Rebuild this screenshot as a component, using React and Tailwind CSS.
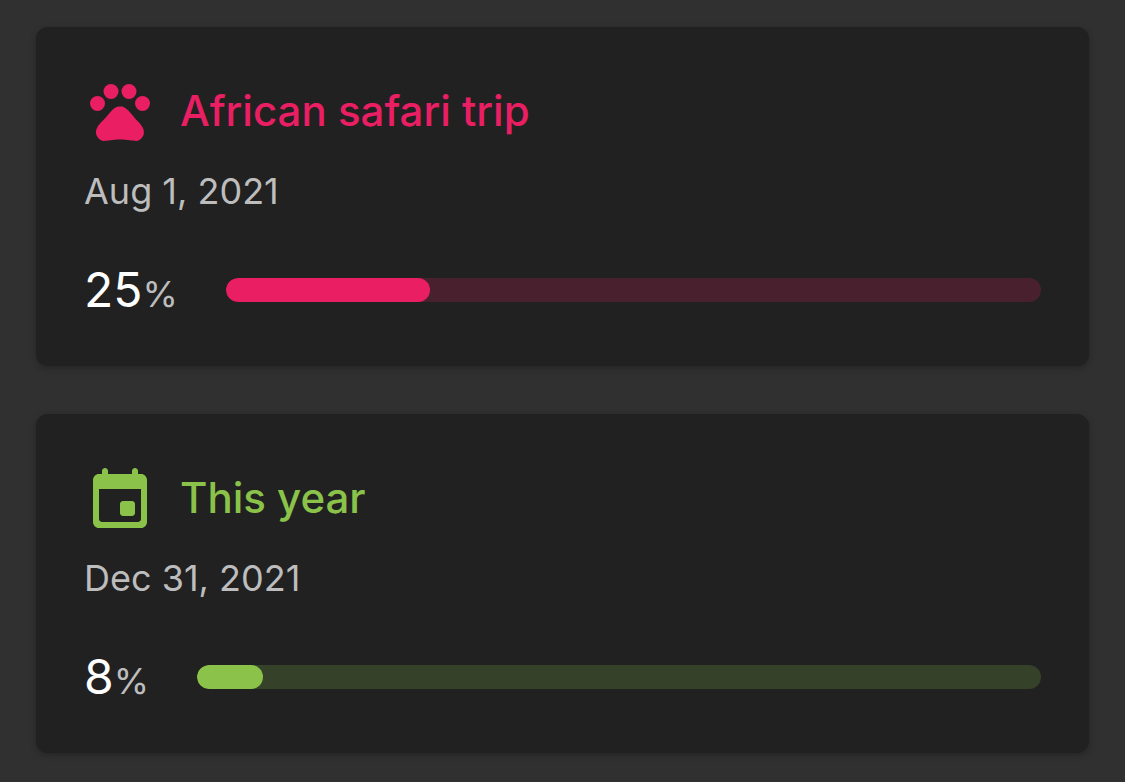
import React from 'react';
import { MdPets } from 'react-icons/md';

const CalendarIcon = ({ size }) => (
  <svg width={size} height={size} viewBox="0 0 24 24" fill="currentColor" aria-hidden="true">
    <path d="M16 13h-3c-.55 0-1 .45-1 1v3c0 .55.45 1 1 1h3c.55 0 1-.45 1-1v-3c0-.55-.45-1-1-1zm0-10v1H8V3c0-.55-.45-1-1-1s-1 .45-1 1v1H5c-1.11 0-1.99.9-1.99 2L3 20c0 1.1.89 2 2 2h14c1.1 0 2-.9 2-2V6c0-1.1-.9-2-2-2h-1V3c0-.55-.45-1-1-1s-1 .45-1 1zm2 17H6c-.55 0-1-.45-1-1V9h14v10c0 .55-.45 1-1 1z" />
  </svg>
);

const App = () => {
  const countdowns = [
    {
      title: 'African safari trip',
      date: 'Aug 1, 2021',
      percent: 25,
      icon: MdPets,
      text: 'text-[#e91e63]',
      bar: 'bg-[#e91e63]',
      track: 'bg-[#49202e]',
    },
    {
      title: 'This year',
      date: 'Dec 31, 2021',
      percent: 7.8,
      icon: CalendarIcon,
      text: 'text-[#8bc34a]',
      bar: 'bg-[#8bc34a]',
      track: 'bg-[#364129]',
    },
  ];

  return (
    <div className="min-h-screen bg-[#303030] px-9 pt-[27px] pb-7 font-['Inter',sans-serif]">
      <main className="flex flex-col gap-12">
        {countdowns.map(({ icon: Icon, ...item }) => (
          <article key={item.title} className="rounded-xl bg-[#212121] p-12 shadow-[0_2px_6px_rgba(0,0,0,0.25)]">
            <header className={`flex items-center gap-6 ${item.text}`}>
              <Icon size={72} aria-hidden="true" />
              <h2 className="text-[42px] leading-[68px] font-medium">{item.title}</h2>
            </header>
            <p className="mt-6 text-[36px] leading-[40px] text-[#bdbdbd]">{item.date}</p>
            <div className="mt-[50px] flex items-center">
              <p className="mr-12 flex items-baseline text-[36px] leading-[40px] text-[#bdbdbd]">
                <span className="text-[48px] leading-[57px] text-white">{Math.round(item.percent)}</span>
                <span>%</span>
              </p>
              <div
                role="progressbar"
                aria-label={item.title}
                aria-valuenow={item.percent}
                aria-valuemin={0}
                aria-valuemax={100}
                className={`h-6 flex-1 overflow-hidden rounded-full ${item.track}`}
              >
                <div className={`h-full rounded-full ${item.bar}`} style={{ width: `${item.percent}%` }} />
              </div>
            </div>
          </article>
        ))}
      </main>
    </div>
  );
};

export default App;
